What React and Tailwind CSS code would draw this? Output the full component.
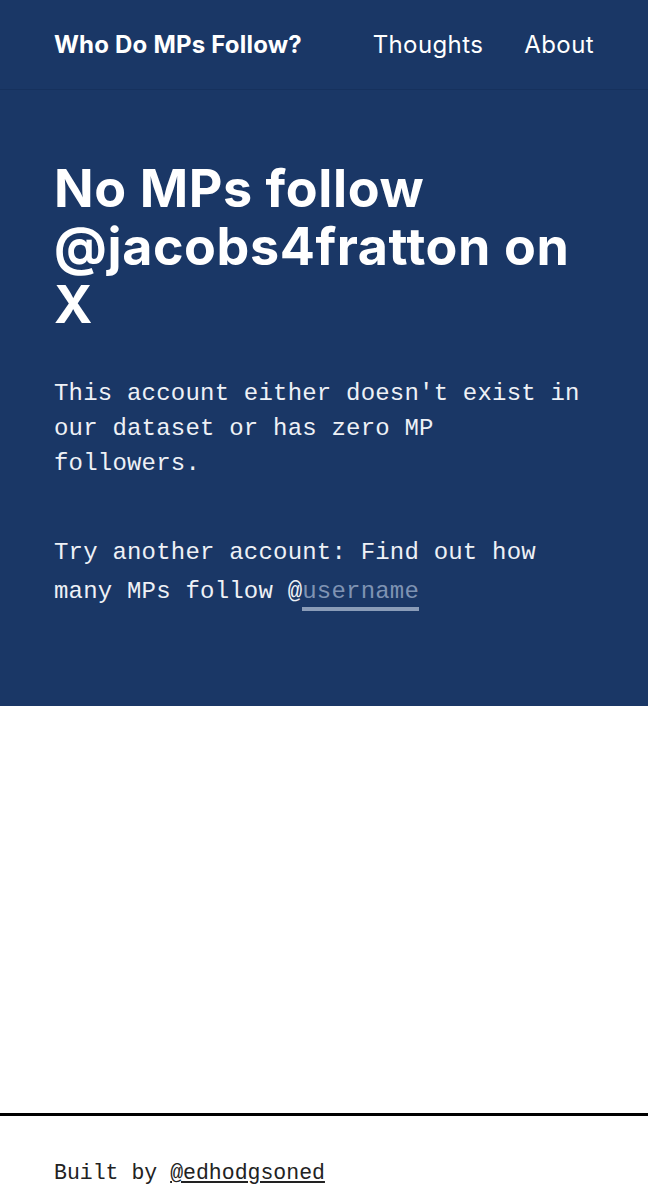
export default function App() {
  return (
    <div className="min-h-[1200px] bg-white flex flex-col">
      <header className="h-[90px] bg-[#1a3766] border-b border-[#16315d] px-[54px] flex items-center justify-between font-['Inter',sans-serif] text-white">
        <a href="#" className="text-[24px] font-bold tracking-[0.2px]">Who Do MPs Follow?</a>
        <nav className="flex gap-[41px] text-[24px] tracking-[0.4px]">
          <a href="#">Thoughts</a>
          <a href="#">About</a>
        </nav>
      </header>

      <main className="bg-[#1a3766] text-white px-[54px] pt-[70px] pb-[95px]">
        <h1 className="font-['Inter',sans-serif] font-bold text-[52px] leading-[58px] tracking-[0.6px]">
          No MPs follow @jacobs4fratton on X
        </h1>
        <p className="mt-[42px] font-['Liberation_Mono',monospace] text-[24px] leading-[35px] tracking-[0.2px] text-[#eef1f6]">
          This account either doesn't exist in our dataset or has zero MP followers.
        </p>
        <form className="mt-[52px] font-['Liberation_Mono',monospace] text-[24px] leading-[39px] tracking-[0.2px] text-[#eef1f6]">
          <label htmlFor="username">Try another account: Find out how many MPs follow @</label>
          <input
            id="username"
            type="text"
            placeholder="username"
            className="w-[117px] bg-transparent border-b-4 border-[#8a9cb8] text-white placeholder:text-[#7f93b3] outline-none leading-[30px] align-baseline"
          />
        </form>
      </main>

      <div className="flex-1 min-h-[407px]" />

      <footer className="border-t-[3px] border-black px-[54px] pt-[41px] pb-[16px] font-['Liberation_Mono',monospace] text-[21.5px] text-[#222]">
        Built by <a href="#" className="underline underline-offset-2">@edhodgsoned</a>
      </footer>
    </div>
  )
}
